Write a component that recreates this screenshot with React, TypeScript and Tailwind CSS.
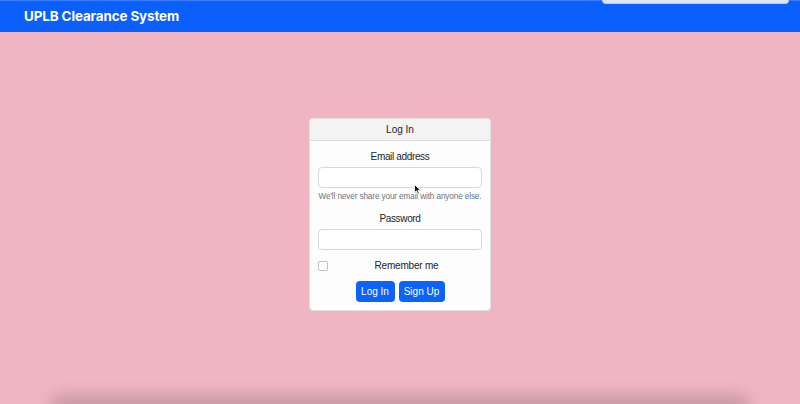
export default function App() {
    return (
        <div className="relative h-[404px] w-full overflow-hidden bg-[#f0b5c3] font-['Liberation_Sans',Arial,sans-serif] text-[#212529]">
            <nav className="flex h-[32px] items-center border-t border-[#3a7bfb] bg-[#0b5ffa] px-[24px]">
                <span className="font-['Inter',sans-serif] text-[13.4px] font-bold tracking-[-0.1px] text-white">UPLB Clearance System</span>
            </nav>

            <main className="flex justify-center pt-[86px]">
                <div className="w-[182px] overflow-hidden rounded-[4px] border border-[#e4dfe1] bg-[#fdfdfd]">
                    <div className="flex h-[22px] items-center justify-center border-b border-[#dcdcdc] bg-[#f3f3f3] text-[10px]">
                        Log In
                    </div>
                    <div className="px-[8px] pb-[8px] pt-[7px]">
                        <div className="flex h-[16px] items-center justify-center text-[10px] tracking-[-0.35px]">Email address</div>
                        <input className="mt-[3px] block h-[21px] w-full rounded-[4px] border border-[#d6d8da] bg-white outline-none" />
                        <div className="mt-[3px] flex h-[12px] items-center justify-center whitespace-nowrap text-[8.2px] tracking-[-0.12px] text-[#6c757d]">
                            We'll never share your email with anyone else.
                        </div>
                        <div className="mt-[7px] flex h-[16px] items-center justify-center text-[10px] tracking-[-0.35px]">Password</div>
                        <input type="password" className="mt-[3px] block h-[21px] w-full rounded-[4px] border border-[#d6d8da] bg-white outline-none" />
                        <div className="mt-[8px] flex h-[15px] items-center">
                            <span className="h-[10px] w-[10px] rounded-[2px] border border-[#bfc3c7] bg-white" />
                            <span className="ml-[3px] flex-1 text-center text-[10px] tracking-[-0.2px]">Remember me</span>
                        </div>
                        <div className="mt-[8px] flex justify-center gap-[4px]">
                            <button className="h-[21px] w-[39px] rounded-[4px] bg-[#0d62f9] text-[10px] text-white">Log In</button>
                            <button className="h-[21px] w-[46px] rounded-[4px] bg-[#0d62f9] text-[10px] text-white">Sign Up</button>
                        </div>
                    </div>
                </div>
            </main>

            {/* popup edge peeking at top right */}
            <div className="absolute left-[602px] top-0 h-[4px] w-[187px] rounded-b-[6px] border border-t-0 border-[#b9c9e3] bg-[#dde5f0]" />

            {/* cursor */}
            <svg className="absolute left-[414px] top-[184px]" width="7" height="11" viewBox="0 0 7 11">
                <path d="M0.5 0.5 L0.5 8.5 L2.5 6.8 L4 10 L5.3 9.4 L3.9 6.3 L6.5 6.3 Z" fill="#111" stroke="#fff" strokeWidth="0.8" />
            </svg>

            {/* bottom window shadow */}
            <div className="absolute bottom-[-12px] left-[50px] right-[50px] h-[22px] rounded-[12px] bg-black/15 blur-[7px]" />
        </div>
    );
}
